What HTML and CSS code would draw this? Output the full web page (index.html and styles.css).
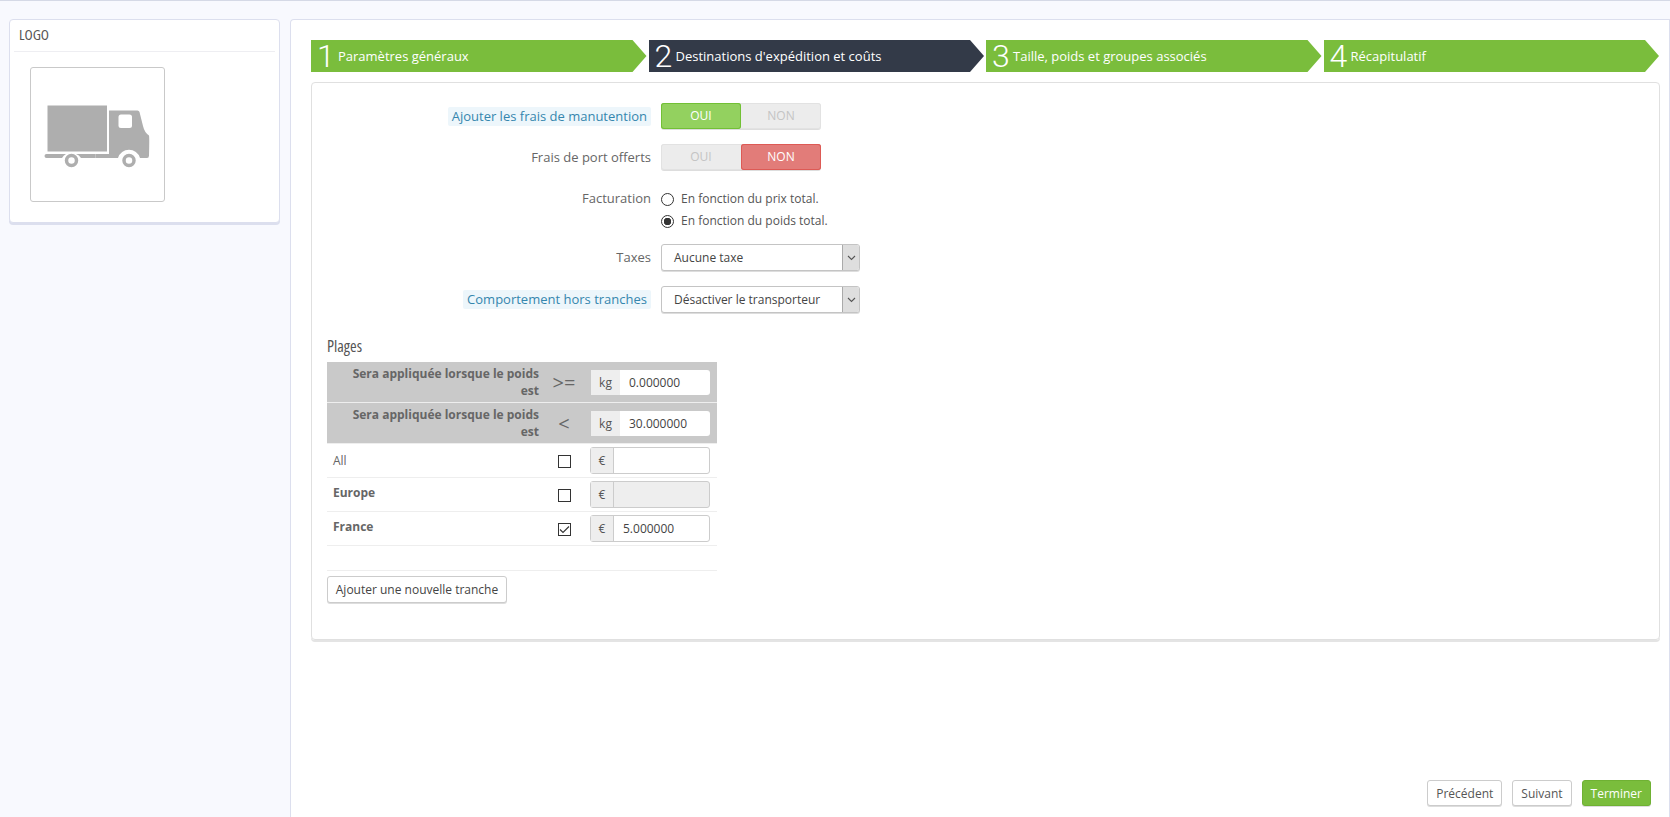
FILE: index.html
```html
<!DOCTYPE html>
<html lang="fr">
<head>
<meta charset="utf-8">
<title>Transporteur</title>
<link rel="stylesheet" href="styles.css">
</head>
<body>
<div class="page">
  <aside class="logo-card">
    <div class="logo-title">LOGO</div>
    <div class="logo-box">
      <svg class="truck" width="132" height="132" viewBox="0 0 132 132">
        <rect x="16.5" y="37.5" width="59.5" height="46" fill="#aeaeae"/>
        <path d="M78 42.5H106.5Q108 42.500 108.500 44L112 58Q113.500 64.500 118 67.500Q118.500 69.500 118 87.500Q118 90 116 90H109A11.500 11.500 0 0 0 87 90H64.500V86H78Z" fill="#aeaeae"/>
        <rect x="87.500" y="46.500" width="13.500" height="13.500" rx="2.500" fill="#fff"/>
        <path d="M15.500 86H35A10 10 0 0 0 31 90H15.500A2 2 0 0 1 15.500 86Z" fill="#aeaeae"/>
        <path d="M45 86H64.500V90H50A10 10 0 0 0 45 86Z" fill="#aeaeae"/>
        <circle cx="40.500" cy="92.500" r="5" fill="#fff" stroke="#aeaeae" stroke-width="3.500"/>
        <circle cx="98" cy="92.500" r="5" fill="#fff" stroke="#aeaeae" stroke-width="3.500"/>
      </svg>
    </div>
  </aside>

  <main class="main">
    <nav class="steps">
      <div class="step"><span class="step-num">1</span><span>Paramètres généraux</span></div>
      <div class="step step-current"><span class="step-num">2</span><span>Destinations d'expédition et coûts</span></div>
      <div class="step"><span class="step-num">3</span><span>Taille, poids et groupes associés</span></div>
      <div class="step"><span class="step-num">4</span><span>Récapitulatif</span></div>
    </nav>

    <section class="panel">
      <div class="form-row">
        <div class="label-col"><span class="label label-hint">Ajouter les frais de manutention</span></div>
        <div class="toggle"><span class="opt opt-yes">OUI</span><span class="opt">NON</span></div>
      </div>
      <div class="form-row form-row-before-radio">
        <div class="label-col"><span class="label">Frais de port offerts</span></div>
        <div class="toggle"><span class="opt">OUI</span><span class="opt opt-no">NON</span></div>
      </div>
      <div class="form-row form-row-radio">
        <div class="label-col"><span class="label">Facturation</span></div>
        <div class="radios">
          <div class="radio-line"><span class="radio"></span><span>En fonction du prix total.</span></div>
          <div class="radio-line"><span class="radio radio-on"></span><span>En fonction du poids total.</span></div>
        </div>
      </div>
      <div class="form-row">
        <div class="label-col"><span class="label">Taxes</span></div>
        <div class="select"><span class="select-text">Aucune taxe</span><span class="select-btn"><svg width="9" height="6" viewBox="0 0 9 6"><path d="M1 1L4.500 4.500L8 1" fill="none" stroke="#555" stroke-width="1.100"/></svg></span></div>
      </div>
      <div class="form-row">
        <div class="label-col"><span class="label label-hint">Comportement hors tranches</span></div>
        <div class="select"><span class="select-text">Désactiver le transporteur</span><span class="select-btn"><svg width="9" height="6" viewBox="0 0 9 6"><path d="M1 1L4.500 4.500L8 1" fill="none" stroke="#555" stroke-width="1.100"/></svg></span></div>
      </div>

      <h3 class="ranges-title">Plages</h3>
      <table class="ranges">
        <colgroup><col class="col-a"><col class="col-b"><col class="col-c"></colgroup>
        <tr class="range-head">
          <th>Sera appliquée lorsque le poids est</th>
          <td class="sign">&gt;=</td>
          <td><div class="group group-head"><span class="addon addon-kg">kg</span><span class="value">0.000000</span></div></td>
        </tr>
        <tr class="range-head">
          <th>Sera appliquée lorsque le poids est</th>
          <td class="sign">&lt;</td>
          <td><div class="group group-head"><span class="addon addon-kg">kg</span><span class="value">30.000000</span></div></td>
        </tr>
        <tr class="zone">
          <td class="zone-name zone-plain">All</td>
          <td><span class="check"></span></td>
          <td><div class="group"><span class="addon">€</span><span class="value"></span></div></td>
        </tr>
        <tr class="zone">
          <td class="zone-name zone-bold">Europe</td>
          <td><span class="check"></span></td>
          <td><div class="group group-off"><span class="addon">€</span><span class="value"></span></div></td>
        </tr>
        <tr class="zone">
          <td class="zone-name zone-bold">France</td>
          <td><span class="check"><svg width="11" height="10" viewBox="0 0 11 10"><path d="M1 4.500L4 7.500L10 1.500" fill="none" stroke="#333" stroke-width="1.100"/></svg></span></td>
          <td><div class="group"><span class="addon">€</span><span class="value">5.000000</span></div></td>
        </tr>
        <tr class="spacer"><td colspan="3"></td></tr>
      </table>
      <button class="btn btn-add" type="button">Ajouter une nouvelle tranche</button>
    </section>

    <footer class="actions">
      <button class="btn" type="button">Précédent</button>
      <button class="btn" type="button">Suivant</button>
      <button class="btn btn-go" type="button">Terminer</button>
    </footer>
  </main>
</div>
</body>
</html>
```

FILE: styles.css
```css
* { box-sizing: border-box; }
html, body { margin: 0; height: 100%; }
body {
  font-family: "Open Sans", "Liberation Sans", sans-serif;
  font-size: 12px;
  color: #555;
  background: #f8f9fe;
  overflow: hidden;
}
.page {
  height: 100vh;
  border-top: 1px solid #d5d9e6;
  display: flex;
  align-items: stretch;
  padding: 18px 0 0 9px;
  gap: 10px;
}
.logo-card {
  width: 271px;
  height: 204px;
  flex: none;
  background: #fff;
  border: 1px solid #dcdfee;
  border-radius: 4px;
  box-shadow: 0 2px 0 #dcdfee;
  padding: 0 4px;
}
.logo-title {
  height: 32px;
  border-bottom: 1px solid #eeeef2;
  padding: 5px 0 0 5px;
  font-size: 15px;
  line-height: 18px;
  font-stretch: 75%;
  color: #555;
}
.logo-box {
  width: 135px;
  height: 135px;
  margin: 15px 0 0 16px;
  border: 1px solid #c9c9c9;
  border-radius: 3px;
}
.truck { display: block; margin: 0; }
.main {
  flex: 1;
  min-width: 0;
  background: #fff;
  border: 1px solid #dcdfee;
  border-bottom: 0;
  border-top-left-radius: 4px;
  padding: 20px 9px 11px 20px;
  display: flex;
  flex-direction: column;
}
.steps { display: flex; gap: 2px; height: 32px; padding-right: 1px; }
.step {
  flex: 1;
  display: flex;
  align-items: center;
  padding-left: 6px;
  background: #7abd3c;
  color: #fff;
  font-size: 13px;
  clip-path: polygon(0 0, calc(100% - 14px) 0, 100% 50%, calc(100% - 14px) 100%, 0 100%);
}
.step-current { background: #333a48; }
.step-num {
  width: 21px;
  flex: none;
  font-family: Roboto, "Open Sans", sans-serif;
  font-size: 32px;
  font-weight: 300;
  line-height: 32px;
}
.panel {
  margin-top: 10px;
  height: 558px;
  border: 1px solid #e0e0e0;
  border-radius: 4px;
  box-shadow: 0 2px 0 #e4e4e4;
  padding: 20px 0 0 15px;
}
.form-row { display: flex; align-items: center; margin-bottom: 15px; min-height: 26px; }
.form-row-before-radio { margin-bottom: 19px; }
.form-row-radio { align-items: flex-start; margin-bottom: 14px; }
.label-col { width: 339px; text-align: right; flex: none; margin-left: -15px; margin-right: 10px; }
.label { font-size: 13px; line-height: 19px; color: #666; display: inline-block; }
.label-hint { background: #edf6fb; color: #3586ae; padding: 0 4px; border-radius: 2px; }
.toggle {
  width: 160px;
  height: 26px;
  display: flex;
  background: #ececec;
  border-radius: 3px;
  box-shadow: inset 0 0 0 1px #e2e2e2, 0 1px 0 #ddd;
}
.opt { flex: 1; text-align: center; line-height: 25px; color: #c4c4c4; font-size: 12px; border-radius: 3px; }
.opt-yes { background: #93d15f; color: #fff; box-shadow: inset 0 0 0 1px #72c035; }
.opt-no { background: #e27c79; color: #fff; box-shadow: inset 0 0 0 1px #dd5a55; }
.radios { display: flex; flex-direction: column; gap: 3px; }
.radio-line { display: flex; align-items: center; height: 19px; gap: 7px; font-size: 12px; color: #555; line-height: 19px; }
.radio { width: 13px; height: 13px; border: 1px solid #333; border-radius: 50%; background: #fff; position: relative; top: 1px; flex: none; }
.radio-on { background: radial-gradient(circle, #333 0 3.5px, #fff 4px); }
.select {
  width: 199px;
  height: 27px;
  display: flex;
  background: #fff;
  border: 1px solid #c4c4c4;
  border-radius: 3px;
  box-shadow: 0 1px 0 #ddd;
}
.select-text { flex: 1; padding-left: 12px; line-height: 25px; color: #444; font-size: 12px; }
.select-btn { width: 17px; display: flex; align-items: center; justify-content: center; background: #dedede; border-left: 1px solid #aaa; border-radius: 0 2px 2px 0; }
.ranges-title { margin: 24px 0 7px; font-size: 16px; font-weight: 400; line-height: 18px; font-stretch: 75%; color: #555; }
.ranges { width: 390px; table-layout: fixed; border-collapse: separate; border-spacing: 0; }
.col-a { width: 217px; }
.col-b { width: 40px; }
.col-c { width: 133px; }
.range-head th, .range-head td { background: #c9c9c9; border-bottom: 1px solid #eee; height: 41px; padding: 0 6px; }
.range-head th { text-align: right; padding-right: 5px; font-size: 12px; font-weight: 700; line-height: 17px; color: #666; }
.range-head .sign { text-align: center; font-size: 20px; padding: 0; color: #666; }
.group { display: flex; width: 120px; height: 27px; background: #fff; border: 1px solid #ccc; border-radius: 3px; }
.group-head { width: 119px; height: 25px; margin-left: 1px; border: 0; }
.addon { width: 23px; background: #eee; border-right: 1px solid #ccc; text-align: center; line-height: 25px; color: #555; flex: none; font-size: 12px; }
.addon-kg { width: 29px; border-right: 0; line-height: 25px; }
.value { flex: 1; padding-left: 9px; font-size: 12px; line-height: 25px; color: #444; }
.group-off { background: #eee; }
.zone td { height: 34px; border-bottom: 1px solid #eee; padding: 0 6px; }
.zone-name { vertical-align: top; line-height: 17px; color: #666; font-size: 12px; }
.zone td.zone-plain { padding-top: 8px; }
.zone td.zone-bold { font-weight: 700; padding-top: 6px; }
.zone td:nth-child(2) { padding: 0; text-align: center; }
.check { display: inline-flex; width: 13px; height: 13px; border: 1px solid #333; vertical-align: middle; align-items: center; justify-content: center; background: #fff; }
.spacer td { height: 25px; border-bottom: 1px solid #eee; }
.btn {
  font-family: inherit;
  font-size: 12px;
  height: 26px;
  padding: 0 8px;
  color: #555;
  background: #fff;
  border: 1px solid #ccc;
  border-radius: 3px;
  box-shadow: 0 1px 0 #ddd;
}
.btn-add { display: block; width: 180px; margin-top: 5px; padding: 0; height: 27px; color: #444; }
.actions { margin-top: auto; display: flex; justify-content: flex-end; gap: 10px; padding-right: 9px; }
.btn-go { background: #7abd3c; border-color: #6fb133; color: #fff; }
```
